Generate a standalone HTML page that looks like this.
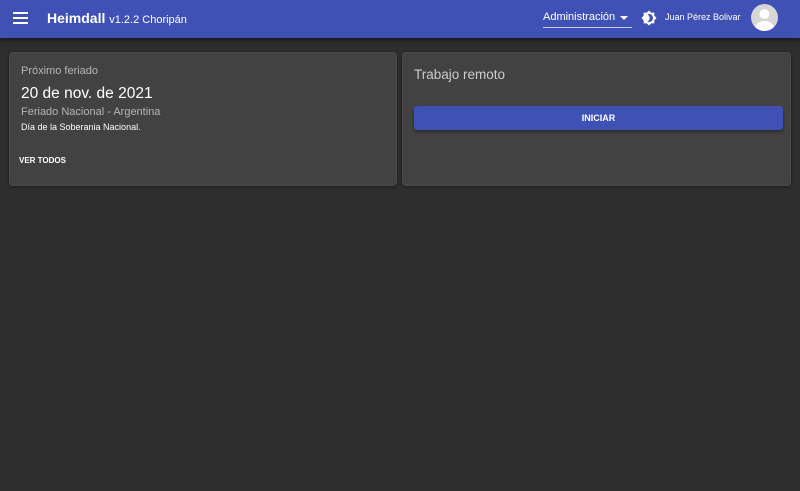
<!DOCTYPE html>
<html><head><meta charset="utf-8"><style>
*{margin:0;padding:0;box-sizing:border-box}
body{width:800px;height:491px;background:#2e2e2e;font-family:"Liberation Sans",sans-serif;overflow:hidden;position:relative}
.bar{position:absolute;left:0;top:0;width:800px;height:38px;background:#3f51b5;box-shadow:0 2px 4px rgba(0,0,0,.5)}
.card{position:absolute;top:52px;height:134px;background:#424242;border:1px solid #4a4a4a;border-radius:4px;box-shadow:0 1px 3px rgba(0,0,0,.4)}
.t{position:absolute;white-space:nowrap}
</style></head><body>
<div class="bar">
<svg class="t" style="left:13px;top:11px" width="15" height="14"><rect y="1" width="15" height="2" fill="#fff"/><rect y="6" width="15" height="2" fill="#fff"/><rect y="11" width="15" height="2" fill="#fff"/></svg>
<div class="t" style="left:47px;top:10px;color:#fff;font-size:14px;font-weight:bold">Heimdall <span style="font-weight:normal;font-size:11px">v1.2.2 Choripán</span></div>
<div class="t" style="left:543px;top:11px;color:#fff;font-size:11px">Administración</div>
<svg class="t" style="left:620px;top:16px" width="8" height="5"><path d="M0 0h8L4 4z" fill="#fff"/></svg>
<div class="t" style="left:543px;top:27px;width:89px;height:1px;background:#c5cae9"></div>
<svg class="t" style="left:641px;top:10px" width="16" height="16" viewBox="0 0 24 24"><path d="M20 8.69V4h-4.69L12 .69 8.69 4H4v4.69L.69 12 4 15.31V20h4.69L12 23.31 15.31 20H20v-4.69L23.31 12 20 8.69zM12 18c-.89 0-1.74-.2-2.5-.55C11.56 16.5 13 14.42 13 12s-1.44-4.5-3.5-5.45C10.26 6.2 11.11 6 12 6c3.31 0 6 2.69 6 6s-2.69 6-6 6z" fill="#fff"/></svg>
<div class="t" style="left:665px;top:12px;color:#fff;font-size:9px">Juan Pérez Bolivar</div>
<svg class="t" style="left:751px;top:4px" width="27" height="27" viewBox="0 0 27 27"><circle cx="13.5" cy="13.5" r="13.5" fill="#d6d6d6"/><circle cx="13.5" cy="10" r="5" fill="#fff"/><path d="M4 23c2-5 6-6 9.5-6s7.5 1 9.5 6a13.5 13.5 0 0 1-19 0z" fill="#fff"/></svg>
</div>
<div class="card" style="left:9px;width:388px">
<div class="t" style="left:11px;top:12px;color:#b5b5b5;font-size:11px">Próximo feriado</div>
<div class="t" style="left:11px;top:32px;color:#fff;font-size:15.5px">20 de nov. de 2021</div>
<div class="t" style="left:11px;top:53px;color:#b5b5b5;font-size:11px">Feriado Nacional - Argentina</div>
<div class="t" style="left:11px;top:69px;color:#fff;font-size:9px">Día de la Soberania Nacional.</div>
<div class="t" style="left:9px;top:103px;color:#fff;font-size:8px;font-weight:bold">VER TODOS</div>
</div>
<div class="card" style="left:402px;width:389px">
<div class="t" style="left:11px;top:14px;color:#ccc;font-size:13.5px">Trabajo remoto</div>
<div class="t" style="left:11px;top:53px;width:369px;height:24px;background:#3f51b5;border-radius:3px;box-shadow:0 2px 3px rgba(0,0,0,.4);color:#fff;font-size:9px;font-weight:bold;text-align:center;line-height:24px">INICIAR</div>
</div>
</body></html>
